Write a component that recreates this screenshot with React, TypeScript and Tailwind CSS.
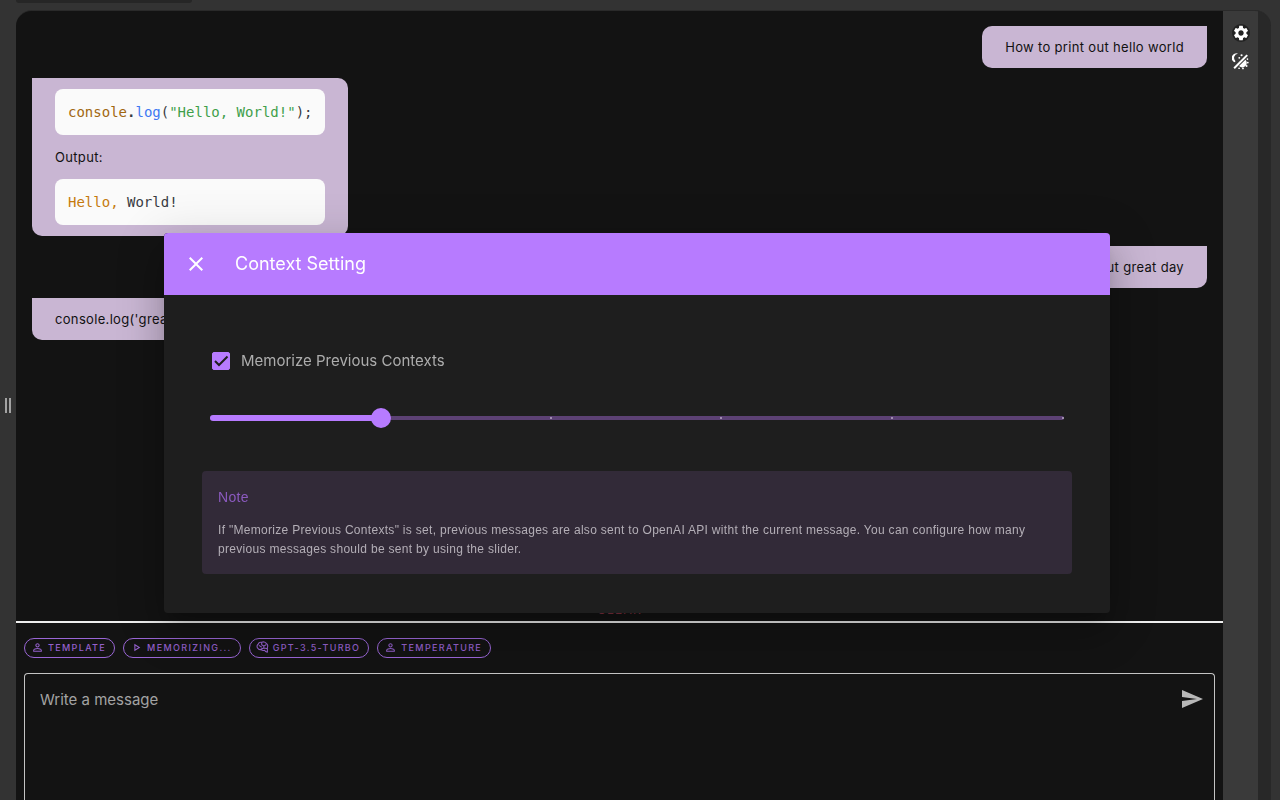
import { useState, type ReactNode } from "react";
import { MdClose, MdOutlinePlayArrow, MdPersonOutline, MdSend, MdSettings } from "react-icons/md";

function UserMessage({ children }: { children: ReactNode }) {
  return (
    <div className="self-end rounded-[10px] rounded-tr-none bg-[#c9b6d3] px-[23px] py-[11px] text-[13px] leading-5 tracking-wide text-[#111111]">
      {children}
    </div>
  );
}

function BotMessage({ children }: { children: ReactNode }) {
  return (
    <div className="self-start rounded-[10px] rounded-tl-none bg-[#c9b6d3] px-[23px] py-[11px] text-[13px] leading-5 tracking-wide text-[#111111]">
      {children}
    </div>
  );
}

function Code({ children }: { children: ReactNode }) {
  return (
    <pre className="flex rounded-lg bg-[#fafafa] p-[13px] text-sm tracking-normal text-[#383a42]">
      <code className="font-['DejaVu_Sans_Mono',monospace]">{children}</code>
    </pre>
  );
}

function Chip({ icon, children }: { icon: ReactNode; children: ReactNode }) {
  return (
    <button
      type="button"
      className="flex h-5 items-center gap-1 rounded-full border border-[#9a66d6] pr-2 pl-[6px] text-[9px] font-medium tracking-[0.15em] text-[#9460cc]"
    >
      <span className="pb-[2px]">{icon}</span>
      {children}
    </button>
  );
}

function BrainIcon() {
  return (
    <svg
      viewBox="0 0 24 24"
      className="size-[13px]"
      fill="none"
      stroke="currentColor"
      strokeWidth="2"
      strokeLinejoin="round"
      strokeLinecap="round"
      aria-hidden="true"
    >
      <path d="M3 13C1 10.500 2 7 4 6 5 3 8 1.500 10.500 2.500 13 1 17 1.500 18.500 4 21.500 5.500 22.500 9 21 12V20.500L17.500 19.500 16 17C13.500 18 10.500 17 9.500 15.500 7.500 16.200 4.500 15.500 3 13Z" />
      <path d="M6 8.500 10 11M10.500 3v4l4 2.500 4-2.500M14.500 9.500V13l-5 2M14.500 13l5 1" />
    </svg>
  );
}

function ThemeIcon() {
  return (
    <svg viewBox="0 0 24 24" className="size-[17px]" fill="currentColor" aria-hidden="true">
      <path d="M8.500 1A6.300 6.300 0 0 0 3.500 13L5 11.500A6 6 0 0 1 8.500 1Z" />
      <circle cx="13.500" cy="3.200" r="1.500" />
      <circle cx="10.300" cy="6.800" r="1.300" />
      <path d="M20.500 2l2 2L4 22.500l-2-2z" />
      <path d="M19 9.500 10 18.500A6.200 6.200 0 0 0 19 9.500Z" />
      <circle cx="21.800" cy="8.600" r="1.200" />
      <circle cx="22.300" cy="13.500" r="1.300" />
      <circle cx="20.600" cy="18.500" r="1.400" />
      <circle cx="15.500" cy="21.800" r="1.300" />
      <circle cx="10" cy="21.500" r="1.200" />
    </svg>
  );
}

const MAX_CONTEXTS = 5;

function ContextDialog() {
  const [count, setCount] = useState(1);
  const [memorize, setMemorize] = useState(true);
  return (
    <div className="fixed inset-0 pt-[233px] pr-[170px] pl-[164px]">
      <section
        role="dialog"
        aria-labelledby="dialog-title"
        className="overflow-hidden rounded bg-[#1e1e1e] shadow-[0_11px_15px_-7px_rgba(0,0,0,0.2),0_24px_38px_3px_rgba(0,0,0,0.14),0_9px_46px_8px_rgba(0,0,0,0.12)]"
      >
        <header className="flex items-center gap-[27px] bg-[#b77bff] px-5 py-4 text-white">
          <button type="button" aria-label="Close">
            <MdClose className="size-6" />
          </button>
          <h2 id="dialog-title" className="text-lg leading-[30px]">Context Setting</h2>
        </header>
        <div className="flex flex-col px-[38px] pt-[54px] pb-[39px]">
          <label className="flex h-6 items-center gap-[11px] self-start pl-[10px] text-[15px] text-[#adadad]">
            <span className="grid size-[18px] place-items-center">
              <input
                type="checkbox"
                checked={memorize}
                onChange={(e) => setMemorize(e.target.checked)}
                className="peer col-start-1 row-start-1 size-[18px] appearance-none rounded-xs border border-[#b77bff] checked:bg-[#b77bff]"
              />
              <svg
                viewBox="0 0 18 18"
                fill="none"
                stroke="currentColor"
                strokeWidth="2"
                aria-hidden="true"
                className="pointer-events-none col-start-1 row-start-1 hidden size-[18px] text-[#1e1e1e] peer-checked:block"
              >
                <path d="M3 9l4 4 8.500-8.500" />
              </svg>
            </span>
            Memorize Previous Contexts
          </label>
          <div className="mt-[35px] grid h-5 items-center px-2">
            <div className="col-start-1 row-start-1 flex h-1 items-center rounded-full bg-[#5c4174]">
              {[1, 2, 3, 4, 5].map((n) => (
                <span key={n} className="flex flex-1 justify-end">
                  <span className="size-[2px] rounded-full bg-[#b9a9c6]" />
                </span>
              ))}
            </div>
            <div
              className="col-start-1 row-start-1 h-[6px] rounded-full bg-[#b77bff]"
              style={{ width: `${(count / MAX_CONTEXTS) * 100}%` }}
            />
            <input
              type="range"
              min={0}
              max={MAX_CONTEXTS}
              value={count}
              onChange={(e) => setCount(Number(e.target.value))}
              aria-label="Number of previous messages"
              className="col-start-1 row-start-1 -mx-[10px] h-5 appearance-none bg-transparent [&::-webkit-slider-thumb]:size-5 [&::-webkit-slider-thumb]:appearance-none [&::-webkit-slider-thumb]:rounded-full [&::-webkit-slider-thumb]:bg-[#b77bff]"
            />
          </div>
          <div className="mt-[43px] rounded bg-[#322a38] px-4 pt-4 pb-[15px] font-['Liberation_Sans',sans-serif]">
            <h3 className="text-sm tracking-wide text-[#8b5abf]">Note</h3>
            <p className="mt-[14px] text-xs leading-[19px] tracking-wide text-[#b3aeb6]">
              If "Memorize Previous Contexts" is set, previous messages are also sent to OpenAI API witht the current
              message. You can configure how many previous messages should be sent by using the slider.
            </p>
          </div>
        </div>
      </section>
    </div>
  );
}

export default function App() {
  return (
    <div className="flex h-screen flex-col overflow-hidden bg-[#333333] font-['Inter',sans-serif]">
      <div className="ml-4 h-[3px] w-44 rounded-b bg-[#262626]" />
      <div className="mt-[7px] flex min-h-0 flex-1 pr-[9px]">
        <div className="flex w-4 items-center justify-center gap-[2px]">
          <span className="h-[15px] w-[2px] bg-[#a3a3a3]" />
          <span className="h-[15px] w-[2px] bg-[#a3a3a3]" />
        </div>
        <div className="flex min-w-0 flex-1 overflow-hidden rounded-t-2xl border-t border-[#2a2a2a] bg-[#282828] pr-[13px]">
          <main className="flex min-w-0 flex-1 flex-col bg-[#131313]">
            <div className="flex min-h-0 flex-1 flex-col gap-[10px] px-4 pt-[15px] pb-[3px]">
              <UserMessage>How to print out hello world</UserMessage>
              <BotMessage>
                <div className="flex flex-col gap-3">
                  <Code>
                    <span className="text-[#a1670f]">console</span>
                    <b>.</b>
                    <span className="text-[#4078f2]">log</span>(<span className="text-[#3f9f4b]">"Hello, World!"</span>);
                  </Code>
                  <p>Output:</p>
                  <Code>
                    <span className="text-[#c57a0e]">Hello,</span> World!
                  </Code>
                </div>
              </BotMessage>
              <UserMessage>How to print out great day</UserMessage>
              <BotMessage>console.log('great day');</BotMessage>
              <button
                type="button"
                className="mt-auto self-center text-xs leading-4 tracking-widest text-[#8a3344]"
              >
                CLEAR
              </button>
            </div>
            <footer className="border-t-2 border-[#eeeeee] px-2 pt-[15px]">
              <div className="flex gap-2">
                <Chip icon={<MdPersonOutline className="size-[13px]" />}>TEMPLATE</Chip>
                <Chip icon={<MdOutlinePlayArrow className="size-[13px]" />}>MEMORIZING...</Chip>
                <Chip icon={<BrainIcon />}>GPT-3.5-TURBO</Chip>
                <Chip icon={<MdPersonOutline className="size-[13px]" />}>TEMPERATURE</Chip>
              </div>
              <form
                className="mt-[15px] flex h-[127px] items-start rounded-t border border-b-0 border-[#c4c4c4] pr-[10px] pl-[15px]"
                onSubmit={(e) => e.preventDefault()}
              >
                <textarea
                  aria-label="Write a message"
                  placeholder="Write a message"
                  className="h-full flex-1 resize-none bg-transparent pt-[14px] text-[15px] leading-6 text-white outline-none placeholder:text-[#a3a3a3]"
                />
                <button type="submit" aria-label="Send" className="mt-[13px] text-[#b8b8b8]">
                  <MdSend className="size-6" />
                </button>
              </form>
            </footer>
          </main>
          <aside className="flex w-[35px] flex-col items-center gap-[11px] bg-[#3a3a3a] pt-[13px] text-white">
            <button type="button" aria-label="Settings" className="rounded-full bg-[#222222]">
              <MdSettings className="size-[18px]" />
            </button>
            <button type="button" aria-label="Toggle theme">
              <ThemeIcon />
            </button>
          </aside>
        </div>
      </div>
      <ContextDialog />
    </div>
  );
}
